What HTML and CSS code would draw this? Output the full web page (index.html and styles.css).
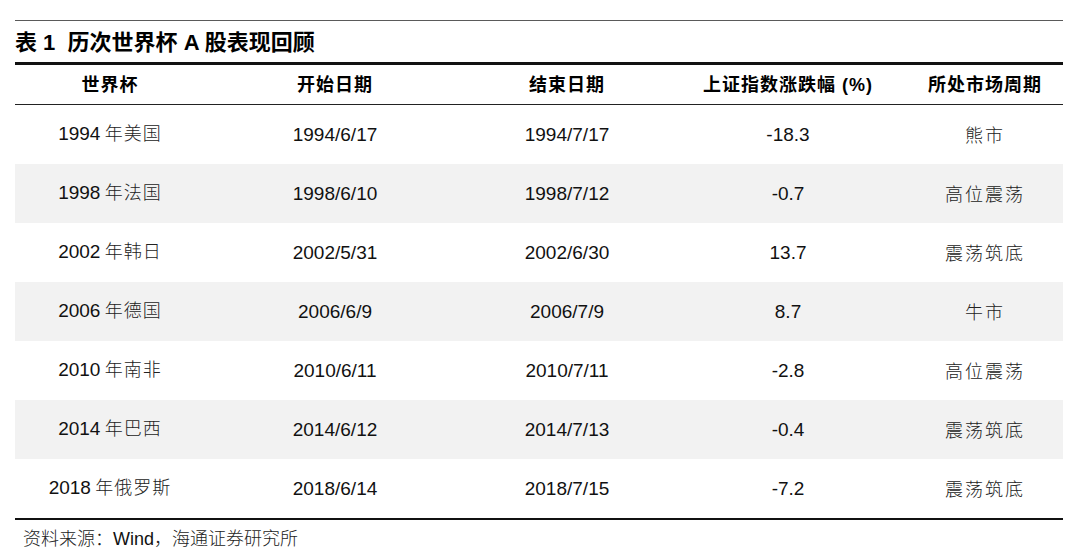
FILE: index.html
```html
<!DOCTYPE html>
<html lang="zh">
<head>
<meta charset="utf-8">
<title>历次世界杯 A 股表现回顾</title>
<link rel="stylesheet" href="styles.css">
</head>
<body>
<div class="page">
  <div class="rule-top"></div>
  <div class="title">表 1&nbsp; 历次世界杯 A 股表现回顾</div>
  <div class="rule-thick"></div>
  <div class="row head">
    <div class="c">世界杯</div>
    <div class="c">开始日期</div>
    <div class="c">结束日期</div>
    <div class="c">上证指数涨跌幅 (%)</div>
    <div class="c">所处市场周期</div>
  </div>
  <div class="rule-thin"></div>
  <div class="row">
    <div class="c c1"><span class="n">1994</span> <span class="z">年美国</span></div>
    <div class="c c2 n">1994/6/17</div>
    <div class="c c3 n">1994/7/17</div>
    <div class="c c4 n">-18.3</div>
    <div class="c c5 z">熊市</div>
  </div>
  <div class="row alt">
    <div class="c c1"><span class="n">1998</span> <span class="z">年法国</span></div>
    <div class="c c2 n">1998/6/10</div>
    <div class="c c3 n">1998/7/12</div>
    <div class="c c4 n">-0.7</div>
    <div class="c c5 z">高位震荡</div>
  </div>
  <div class="row">
    <div class="c c1"><span class="n">2002</span> <span class="z">年韩日</span></div>
    <div class="c c2 n">2002/5/31</div>
    <div class="c c3 n">2002/6/30</div>
    <div class="c c4 n">13.7</div>
    <div class="c c5 z">震荡筑底</div>
  </div>
  <div class="row alt">
    <div class="c c1"><span class="n">2006</span> <span class="z">年德国</span></div>
    <div class="c c2 n">2006/6/9</div>
    <div class="c c3 n">2006/7/9</div>
    <div class="c c4 n">8.7</div>
    <div class="c c5 z">牛市</div>
  </div>
  <div class="row">
    <div class="c c1"><span class="n">2010</span> <span class="z">年南非</span></div>
    <div class="c c2 n">2010/6/11</div>
    <div class="c c3 n">2010/7/11</div>
    <div class="c c4 n">-2.8</div>
    <div class="c c5 z">高位震荡</div>
  </div>
  <div class="row alt">
    <div class="c c1"><span class="n">2014</span> <span class="z">年巴西</span></div>
    <div class="c c2 n">2014/6/12</div>
    <div class="c c3 n">2014/7/13</div>
    <div class="c c4 n">-0.4</div>
    <div class="c c5 z">震荡筑底</div>
  </div>
  <div class="row">
    <div class="c c1"><span class="n">2018</span> <span class="z">年俄罗斯</span></div>
    <div class="c c2 n">2018/6/14</div>
    <div class="c c3 n">2018/7/15</div>
    <div class="c c4 n">-7.2</div>
    <div class="c c5 z">震荡筑底</div>
  </div>
  <div class="rule-bottom"></div>
  <div class="source">资料来源：<span class="n">Wind</span>，海通证券研究所</div>
</div>
</body>
</html>
```

FILE: styles.css
```css
html, body {
  margin: 0;
  padding: 0;
  background: #ffffff;
}
body {
  font-family: "Liberation Sans", "Noto Sans CJK SC", sans-serif;
  color: #111111;
}
.page {
  width: 1048px;
  margin-left: 15px;
  padding-top: 20px;
}
.rule-top {
  height: 1px;
  background: #5a5a5a;
}
.title {
  height: 41px;
  line-height: 44px;
  font-size: 22px;
  font-weight: bold;
  color: #000;
  white-space: nowrap;
}
.rule-thick {
  height: 3px;
  background: #111;
}
.rule-thin {
  height: 1px;
  background: #222;
}
.rule-bottom {
  height: 2px;
  background: #111;
}
.row {
  display: grid;
  grid-template-columns: 190px 260px 204px 238px 156px;
  height: 59px;
  align-items: center;
}
.row.head {
  height: 39px;
  font-weight: bold;
  font-size: 18px;
  letter-spacing: 1px;
  color: #000;
}
.row.alt {
  background: #f2f2f2;
}
.c {
  text-align: center;
  white-space: nowrap;
  line-height: 22px;
}
.c1 {
  padding-bottom: 2px;
}
.n {
  font-family: "Liberation Sans", sans-serif;
  font-size: 19px;
  color: #111;
}
.z {
  font-family: "Noto Sans CJK SC", sans-serif;
  font-size: 18px;
  font-weight: 300;
  color: #222;
  letter-spacing: 1px;
}
.c5.z {
  letter-spacing: 2px;
  padding-bottom: 2px;
}
.source {
  height: 38px;
  line-height: 34px;
  padding-left: 8px;
  font-family: "Noto Sans CJK SC", sans-serif;
  font-size: 18px;
  font-weight: 300;
  color: #222;
}
.source .n {
  font-size: 18px;
}
```
